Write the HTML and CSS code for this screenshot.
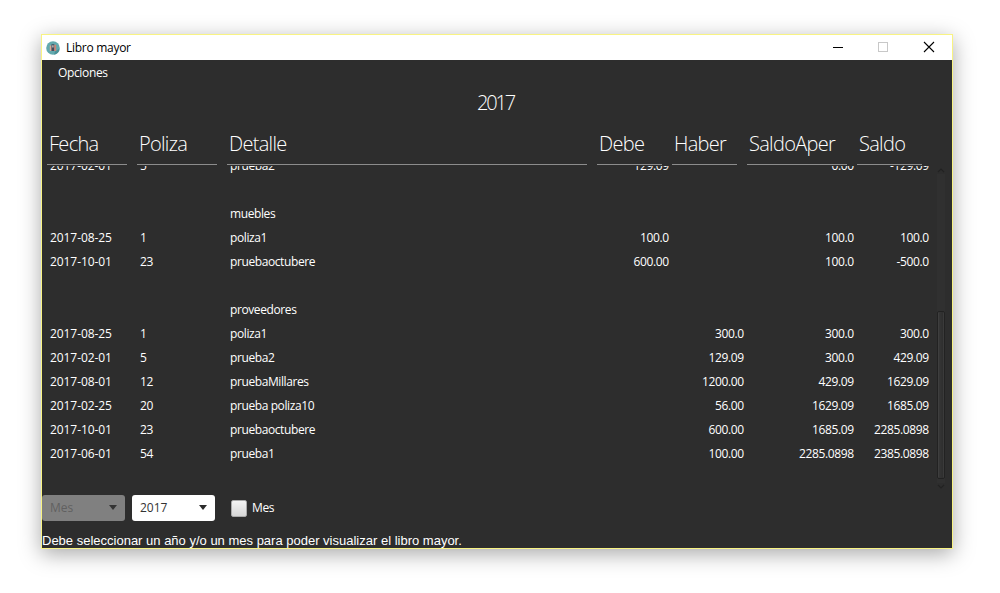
FILE: index.html
```html
<!DOCTYPE html>
<html lang="es">
<head>
<meta charset="utf-8">
<title>Libro mayor</title>
<link rel="stylesheet" href="styles.css">
</head>
<body>
<div class="window">
  <header class="titlebar">
    <svg class="app-icon" width="14" height="14" viewBox="0 0 14 14"><circle cx="7" cy="7" r="6.800" fill="#62a9ae"/><path d="M9 10.500l4.500-3A6.800 6.800 0 0 1 8 13.700z" fill="#4a9096"/><path d="M3.800 4.500h1.800V10H3.800z" fill="#dba593"/><path d="M5.500 3.200h2.800V10H5.500z" fill="#454a5c"/><path d="M6.300 4.200h1.200v2.200H6.300z" fill="#d8d3cc"/><path d="M8.300 3.800h1.800V10H8.300z" fill="#cf8273"/></svg>
    <span class="title">Libro mayor</span>
    <svg class="controls" width="102" height="12" viewBox="0 0 102 12" fill="none" shape-rendering="crispEdges"><path d="M0 6.500h10" stroke="#000"/><path d="M45.500 1.500h9v9h-9z" stroke="#c8c8c8"/><path d="M91 1l10 10M101 1l-10 10" stroke="#000" stroke-width="1.100" shape-rendering="auto"/></svg>
  </header>
  <nav class="menubar"><span>Opciones</span></nav>
  <h1 class="year">2017</h1>
  <div class="columns heads">
    <span>Fecha</span><span>Poliza</span><span>Detalle</span><span>Debe</span><span>Haber</span><span>SaldoAper</span><span>Saldo</span>
  </div>
  <div class="ledger">
    <div class="rows">
      <div class="columns row"><span>2017-02-01</span><span>5</span><span>prueba2</span><span>129.09</span><span></span><span>0.00</span><span>-129.09</span></div>
      <div class="columns row"></div>
      <div class="columns row"><span></span><span></span><span>muebles</span></div>
      <div class="columns row"><span>2017-08-25</span><span>1</span><span>poliza1</span><span>100.0</span><span></span><span>100.0</span><span>100.0</span></div>
      <div class="columns row"><span>2017-10-01</span><span>23</span><span>pruebaoctubere</span><span>600.00</span><span></span><span>100.0</span><span>-500.0</span></div>
      <div class="columns row"></div>
      <div class="columns row"><span></span><span></span><span>proveedores</span></div>
      <div class="columns row"><span>2017-08-25</span><span>1</span><span>poliza1</span><span></span><span>300.0</span><span>300.0</span><span>300.0</span></div>
      <div class="columns row"><span>2017-02-01</span><span>5</span><span>prueba2</span><span></span><span>129.09</span><span>300.0</span><span>429.09</span></div>
      <div class="columns row"><span>2017-08-01</span><span>12</span><span>pruebaMillares</span><span></span><span>1200.00</span><span>429.09</span><span>1629.09</span></div>
      <div class="columns row"><span>2017-02-25</span><span>20</span><span>prueba poliza10</span><span></span><span>56.00</span><span>1629.09</span><span>1685.09</span></div>
      <div class="columns row"><span>2017-10-01</span><span>23</span><span>pruebaoctubere</span><span></span><span>600.00</span><span>1685.09</span><span>2285.0898</span></div>
      <div class="columns row"><span>2017-06-01</span><span>54</span><span>prueba1</span><span></span><span>100.00</span><span>2285.0898</span><span>2385.0898</span></div>
    </div>
    <div class="scrollbar">
      <svg width="8" height="8" viewBox="0 0 8 8" fill="none" stroke="#222" stroke-width="1.200"><path d="M1 6l3-3 3 3"/></svg>
      <div class="track"><div class="thumb"></div></div>
      <svg width="8" height="8" viewBox="0 0 8 8" fill="none" stroke="#222" stroke-width="1.200"><path d="M1 2l3 3 3-3"/></svg>
    </div>
  </div>
  <div class="filters">
    <div class="combo disabled"><span>Mes</span><svg width="8" height="5" viewBox="0 0 8 5"><path d="M0 0h8L4 5z" fill="#333"/></svg></div>
    <div class="combo"><span>2017</span><svg width="8" height="5" viewBox="0 0 8 5"><path d="M0 0h8L4 5z" fill="#2b2b2b"/></svg></div>
    <span class="check"></span><span class="check-label">Mes</span>
  </div>
  <footer class="hint">Debe seleccionar un año y/o un mes para poder visualizar el libro mayor.</footer>
</div>
</body>
</html>
```
FILE: styles.css
```css
* { box-sizing: border-box; }
body {
  margin: 0;
  height: 593px;
  padding: 34px 0 0 41px;
  background: #fff;
  font: 12px/24px "Open Sans", "Noto Sans", sans-serif;
  color: #fff;
  overflow: hidden;
}
.window {
  width: 912px;
  height: 515px;
  border: 1px solid #f8f383;
  background: #2d2d2d;
  box-shadow: 0 5px 20px rgba(0, 0, 0, .34);
  display: flex;
  flex-direction: column;
}
.titlebar {
  height: 25px;
  flex: none;
  background: #fff;
  color: #000;
  display: flex;
  align-items: center;
  padding: 0 17px 0 4px;
}
.app-icon { flex: none; }
.title { margin-left: 6px; letter-spacing: -.28px; }
.controls { margin: 0 0 2px auto; }
.menubar { height: 26px; flex: none; padding: 1px 16px; letter-spacing: -.35px; }
.year {
  margin: 0;
  height: 32px;
  flex: none;
  padding-right: 3px;
  font-size: 20px;
  line-height: 34px;
  font-weight: 300;
  text-align: center;
  letter-spacing: -2.200px;
}
.columns {
  display: grid;
  grid-template-columns: 90px 90px 370px 75px 75px 110px 75px;
  padding-left: 5px;
}
.heads {
  height: 47px;
  flex: none;
  font-size: 20px;
  line-height: 52px;
  font-weight: 300;
  letter-spacing: -.7px;
}
.heads span {
  height: 47px;
  margin-right: 10px;
  padding-left: 2px;
  border-bottom: 1px solid #8c8c8c;
  white-space: nowrap;
}
.ledger {
  height: 325px;
  margin-top: 1px;
  flex: none;
  display: flex;
  overflow: hidden;
}
.rows { width: 894px; margin-top: -12px; flex: none; }
.row { height: 24px; letter-spacing: -.35px; }
.row span { padding: 0 3px; white-space: nowrap; }
.row span:first-child { letter-spacing: -.07px; }
.row span:nth-child(3) { letter-spacing: -.4px; }
.row span:nth-child(n+4) { text-align: right; padding-right: 3.200px; }
.scrollbar {
  width: 10px;
  display: flex;
  flex-direction: column;
  align-items: center;
}
.track { width: 8px; flex: 1; background: #303030; display: flex; align-items: flex-end; }
.thumb {
  width: 8px;
  height: 168px;
  margin-bottom: 4px;
  border: 1px solid #222;
  border-radius: 2px;
  background: linear-gradient(90deg, #434343, #353535 25%, #2f2f2f 75%, #404040);
}
.filters { display: flex; height: 27px; margin-top: 3px; flex: none; align-items: center; }
.combo {
  width: 83px;
  height: 26px;
  margin-right: 6px;
  padding: 0 8px;
  display: flex;
  align-items: center;
  justify-content: space-between;
  border-radius: 3px;
  background: #fff;
  color: #333;
}
.combo.disabled { margin-right: 7px; background: #808080; color: #606060; }
.check {
  width: 16px;
  height: 17px;
  margin: 1px 5px 0 10px;
  border: 1px solid #aaa;
  border-radius: 2px;
  background: linear-gradient(#f4f4f4, #d6d6d6);
}
.check-label { letter-spacing: -.35px; }
.hint {
  font: 13px/15px "Liberation Sans", Arial, sans-serif;
  margin-top: 12px;
  white-space: nowrap;
}
```
